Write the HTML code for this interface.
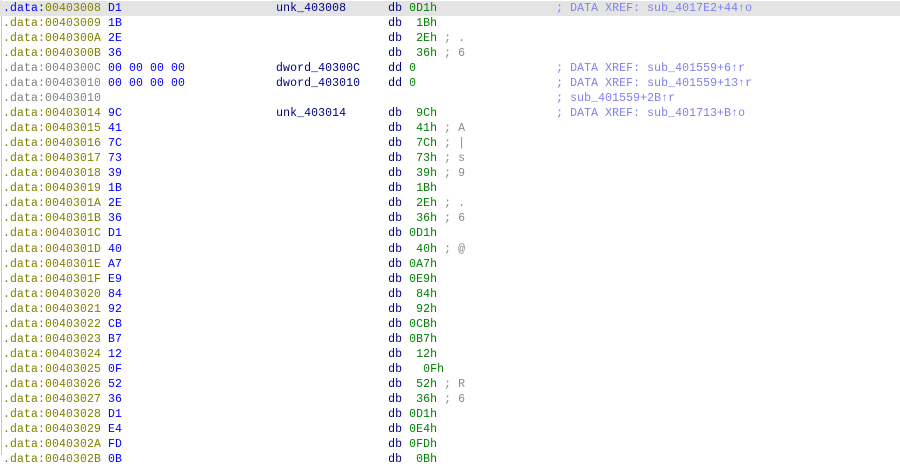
<!DOCTYPE html>
<html><head><style>
body{margin:0;width:900px;height:455px;overflow:hidden;background:#fff;position:relative}
.b{position:absolute;left:1px;top:0;bottom:0;width:1px;background:#c8c8c8}
pre{margin:0;position:absolute;left:3px;top:1px;font-family:"Liberation Mono",monospace;font-size:11.5px;letter-spacing:0.1px;line-height:15.03px;color:#000080}
.l{display:block;width:897px;margin-left:-3px;padding-left:3px}
.h{background:#e4e4e4}
.o{color:#808000}.g{color:#808080}.u{color:#0000ff}.v{color:#008000}.c{color:#8a8a8a}.x{color:#8080ee}
</style></head><body><div class="b"></div><pre><span class="l h"><span class="u">.data:</span><span class="o">00403008</span> <span class="u">D1</span>                      unk_403008      db <span class="v">0D1h</span>                 <span class="x">; DATA XREF: sub_4017E2+44↑o</span></span><span class="l"><span class="o">.data:00403009</span> <span class="u">1B</span>                                      db  <span class="v">1Bh</span></span><span class="l"><span class="o">.data:0040300A</span> <span class="u">2E</span>                                      db  <span class="v">2Eh</span> <span class="c">; .</span></span><span class="l"><span class="o">.data:0040300B</span> <span class="u">36</span>                                      db  <span class="v">36h</span> <span class="c">; 6</span></span><span class="l"><span class="g">.data:0040300C</span> <span class="u">00 00 00 00</span>             dword_40300C    dd <span class="v">0</span>                    <span class="x">; DATA XREF: sub_401559+6↑r</span></span><span class="l"><span class="g">.data:00403010</span> <span class="u">00 00 00 00</span>             dword_403010    dd <span class="v">0</span>                    <span class="x">; DATA XREF: sub_401559+13↑r</span></span><span class="l"><span class="g">.data:00403010</span>                                                                 <span class="x">; sub_401559+2B↑r</span></span><span class="l"><span class="o">.data:00403014</span> <span class="u">9C</span>                      unk_403014      db  <span class="v">9Ch</span>                 <span class="x">; DATA XREF: sub_401713+B↑o</span></span><span class="l"><span class="o">.data:00403015</span> <span class="u">41</span>                                      db  <span class="v">41h</span> <span class="c">; A</span></span><span class="l"><span class="o">.data:00403016</span> <span class="u">7C</span>                                      db  <span class="v">7Ch</span> <span class="c">; |</span></span><span class="l"><span class="o">.data:00403017</span> <span class="u">73</span>                                      db  <span class="v">73h</span> <span class="c">; s</span></span><span class="l"><span class="o">.data:00403018</span> <span class="u">39</span>                                      db  <span class="v">39h</span> <span class="c">; 9</span></span><span class="l"><span class="o">.data:00403019</span> <span class="u">1B</span>                                      db  <span class="v">1Bh</span></span><span class="l"><span class="o">.data:0040301A</span> <span class="u">2E</span>                                      db  <span class="v">2Eh</span> <span class="c">; .</span></span><span class="l"><span class="o">.data:0040301B</span> <span class="u">36</span>                                      db  <span class="v">36h</span> <span class="c">; 6</span></span><span class="l"><span class="o">.data:0040301C</span> <span class="u">D1</span>                                      db <span class="v">0D1h</span></span><span class="l"><span class="o">.data:0040301D</span> <span class="u">40</span>                                      db  <span class="v">40h</span> <span class="c">; @</span></span><span class="l"><span class="o">.data:0040301E</span> <span class="u">A7</span>                                      db <span class="v">0A7h</span></span><span class="l"><span class="o">.data:0040301F</span> <span class="u">E9</span>                                      db <span class="v">0E9h</span></span><span class="l"><span class="o">.data:00403020</span> <span class="u">84</span>                                      db  <span class="v">84h</span></span><span class="l"><span class="o">.data:00403021</span> <span class="u">92</span>                                      db  <span class="v">92h</span></span><span class="l"><span class="o">.data:00403022</span> <span class="u">CB</span>                                      db <span class="v">0CBh</span></span><span class="l"><span class="o">.data:00403023</span> <span class="u">B7</span>                                      db <span class="v">0B7h</span></span><span class="l"><span class="o">.data:00403024</span> <span class="u">12</span>                                      db  <span class="v">12h</span></span><span class="l"><span class="o">.data:00403025</span> <span class="u">0F</span>                                      db   <span class="v">0Fh</span></span><span class="l"><span class="o">.data:00403026</span> <span class="u">52</span>                                      db  <span class="v">52h</span> <span class="c">; R</span></span><span class="l"><span class="o">.data:00403027</span> <span class="u">36</span>                                      db  <span class="v">36h</span> <span class="c">; 6</span></span><span class="l"><span class="o">.data:00403028</span> <span class="u">D1</span>                                      db <span class="v">0D1h</span></span><span class="l"><span class="o">.data:00403029</span> <span class="u">E4</span>                                      db <span class="v">0E4h</span></span><span class="l"><span class="o">.data:0040302A</span> <span class="u">FD</span>                                      db <span class="v">0FDh</span></span><span class="l"><span class="o">.data:0040302B</span> <span class="u">0B</span>                                      db  <span class="v">0Bh</span></span></pre></body></html>
